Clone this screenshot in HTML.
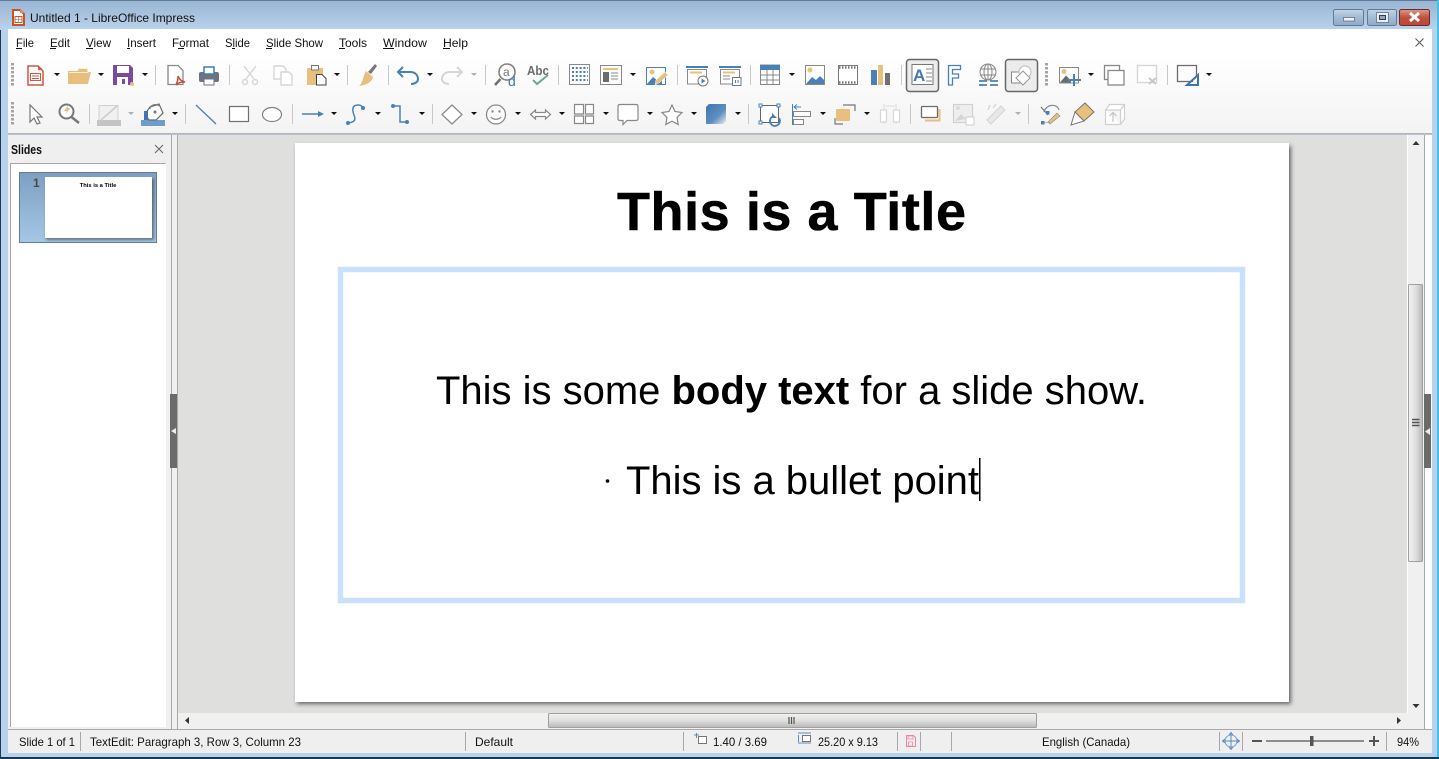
<!DOCTYPE html>
<html><head><meta charset="utf-8"><style>
html,body{margin:0;padding:0;width:1439px;height:759px;overflow:hidden;background:#b9d1ea}
svg{display:block;position:absolute;left:0;top:0}
text{font-family:"Liberation Sans",sans-serif;fill:#111;font-size:12px}
.sep{stroke:#c8c8c8;stroke-width:1}
.g{fill:none;stroke:#8a8a8a;stroke-width:1.4}
.l{fill:none;stroke:#d6d6d6;stroke-width:1.4}
.b{fill:none;stroke:#4a80b8;stroke-width:1.6}
</style></head><body>
<svg width="1439" height="759" viewBox="0 0 1439 759" xmlns="http://www.w3.org/2000/svg">
<defs>
<linearGradient id="tb" x1="0" y1="0" x2="0" y2="1"><stop offset="0" stop-color="#98b4d2"/><stop offset="1" stop-color="#b9d2eb"/></linearGradient>
<linearGradient id="tool" x1="0" y1="0" x2="0" y2="1"><stop offset="0" stop-color="#fff"/><stop offset="1" stop-color="#f3f3f3"/></linearGradient>
<linearGradient id="thumb" x1="0" y1="0" x2="0" y2="1"><stop offset="0" stop-color="#7f9fc2"/><stop offset="1" stop-color="#a6c6e6"/></linearGradient>
<linearGradient id="hs" x1="0" y1="0" x2="0" y2="1"><stop offset="0" stop-color="#f2f2f2"/><stop offset=".5" stop-color="#e0e0e0"/><stop offset="1" stop-color="#b8b8b8"/></linearGradient>
<linearGradient id="vs" x1="0" y1="0" x2="1" y2="0"><stop offset="0" stop-color="#f2f2f2"/><stop offset=".5" stop-color="#e0e0e0"/><stop offset="1" stop-color="#b8b8b8"/></linearGradient>
<linearGradient id="btn" x1="0" y1="0" x2="0" y2="1"><stop offset="0" stop-color="#c3d4e6"/><stop offset=".5" stop-color="#a3bbd4"/><stop offset="1" stop-color="#8fabc9"/></linearGradient>
<linearGradient id="cbtn" x1="0" y1="0" x2="0" y2="1"><stop offset="0" stop-color="#dc9a8c"/><stop offset=".5" stop-color="#c0503c"/><stop offset="1" stop-color="#b84a38"/></linearGradient>
<linearGradient id="cube" x1="0" y1="0" x2="1" y2="1"><stop offset="0" stop-color="#3f74ad"/><stop offset=".6" stop-color="#5f8fc0"/><stop offset="1" stop-color="#e8eef5"/></linearGradient>
<filter id="sh" x="-5%" y="-5%" width="110%" height="110%"><feGaussianBlur stdDeviation="2"/></filter>
<filter id="sh2" x="-10%" y="-10%" width="120%" height="120%"><feGaussianBlur stdDeviation="1.2"/></filter>
</defs>

<!-- window frame -->
<rect width="1439" height="759" fill="#b9d1ea"/>
<rect width="1439" height="29" fill="url(#tb)"/>
<rect x="0" y="0" width="1439" height="1" fill="#5e7c99"/>
<rect x="1437" y="0" width="2" height="759" fill="#3fc3ee"/>
<rect x="0" y="757" width="1439" height="2" fill="#143a52"/>
<rect x="0" y="30" width="1" height="727" fill="#1c3a52"/>

<!-- title -->
<path d="M13 10h7l4 4v11H13z" fill="#fff" stroke="#c2552b" stroke-width="2"/>
<rect x="15" y="16.500" width="7" height="6" fill="none" stroke="#c2552b"/>
<path d="M15 19.500h7M18.500 17v5" stroke="#c2552b" stroke-width=".6"/>
<path d="M20 9l4 4h-4z" fill="#e08a5a"/>
<text x="30" y="22" textLength="165" lengthAdjust="spacingAndGlyphs">Untitled 1 - LibreOffice Impress</text>
<rect x="1333.500" y="9.500" width="30" height="16" rx="2" fill="url(#btn)" stroke="#5f7a96"/>
<rect x="1343.500" y="17.500" width="11" height="3.500" fill="#f0f0f0" stroke="#50657a" stroke-width=".7"/>
<rect x="1367.500" y="9.500" width="29" height="16" rx="2" fill="url(#btn)" stroke="#5f7a96"/>
<rect x="1376.500" y="12.500" width="12" height="10" fill="#e8eef4" stroke="#50657a" stroke-width=".7"/>
<rect x="1379.500" y="15.500" width="6" height="4" fill="#8fa6bd" stroke="#2e3e50"/>
<rect x="1399.500" y="9.500" width="30" height="16" rx="2" fill="url(#cbtn)" stroke="#6b2a22"/>
<path d="M1410 13l9 8M1419 13l-9 8" stroke="#fff" stroke-width="3"/>

<!-- client -->
<rect x="8" y="29" width="1424" height="27" fill="#fff"/>
<rect x="8" y="56" width="1424" height="78" fill="url(#tool)"/>
<rect x="8" y="133" width="1424" height="1.500" fill="#b5b5b5"/>
<g>
<text x="16" y="47" textLength="18" lengthAdjust="spacingAndGlyphs">File</text><rect x="16" y="48" width="6" height="1" fill="#111"/>
<text x="50" y="47" textLength="20" lengthAdjust="spacingAndGlyphs">Edit</text><rect x="50" y="48" width="6" height="1" fill="#111"/>
<text x="86" y="47" textLength="25" lengthAdjust="spacingAndGlyphs">View</text><rect x="86" y="48" width="7" height="1" fill="#111"/>
<text x="127" y="47" textLength="29" lengthAdjust="spacingAndGlyphs">Insert</text><rect x="127" y="48" width="3" height="1" fill="#111"/>
<text x="172" y="47" textLength="37" lengthAdjust="spacingAndGlyphs">Format</text><rect x="178" y="48" width="6" height="1" fill="#111"/>
<text x="225" y="47" textLength="25" lengthAdjust="spacingAndGlyphs">Slide</text><rect x="232" y="48" width="3" height="1" fill="#111"/>
<text x="266" y="47" textLength="57" lengthAdjust="spacingAndGlyphs">Slide Show</text><rect x="266" y="48" width="6" height="1" fill="#111"/>
<text x="339" y="47" textLength="28" lengthAdjust="spacingAndGlyphs">Tools</text><rect x="339" y="48" width="6" height="1" fill="#111"/>
<text x="383" y="47" textLength="44" lengthAdjust="spacingAndGlyphs">Window</text><rect x="383" y="48" width="11" height="1" fill="#111"/>
<text x="443" y="47" textLength="25" lengthAdjust="spacingAndGlyphs">Help</text><rect x="443" y="48" width="7" height="1" fill="#111"/>
</g>
<path d="M1415.500 38.500l8 8M1423.500 38.500l-8 8" stroke="#555" stroke-width="1"/>

<!-- grips -->
<path d="M12.500 63v24M12.500 102v24M1046.500 63v24" stroke="#a4a4a4" stroke-width="3" stroke-dasharray="2.500 1.500"/>

<!-- separators -->
<g class="sep">
<path d="M155.500 65v20M229.500 65v20M347.500 65v20M388.500 65v20M485.500 65v20M558.500 65v20M677.500 65v20M750.500 65v20M901.500 65v20M1167.500 65v20"/>
<path d="M89.500 104v20M185.500 104v20M292.500 104v20M432.500 104v20M748.500 104v20M910.500 104v20M1028.500 104v20"/>
</g>

<!-- dropdown arrows -->
<g fill="#111">
<path d="M54 73h6l-3 3zM98 73h6l-3 3zM142 73h6l-3 3zM334 73h6l-3 3zM427 73h6l-3 3zM630 73h6l-3 3zM789 73h6l-3 3zM1088 73h6l-3 3zM1206 73h6l-3 3z"/>
<path d="M172 112h6l-3 3zM331 112h6l-3 3zM375 112h6l-3 3zM419 112h6l-3 3zM471 112h6l-3 3zM515 112h6l-3 3zM559 112h6l-3 3zM603 112h6l-3 3zM647 112h6l-3 3zM691 112h6l-3 3zM735 112h6l-3 3zM820 112h6l-3 3zM864 112h6l-3 3z"/>
</g>
<g fill="#b0b0b0"><path d="M471 73h6l-3 3zM128 112h6l-3 3zM1015 112h6l-3 3z"/></g>

<!-- Row 1 -->
<path d="M28 66h10l5 5v14H28z" fill="#fff" stroke="#d4573f" stroke-width="1.500"/>
<path d="M38 65l5 5h-5z" fill="#d4573f"/>
<rect x="30.500" y="73.500" width="10" height="7" fill="#fff" stroke="#d4573f"/>
<path d="M32 76h7M32 78.500h7" stroke="#d4573f"/>
<path d="M68 71h9l3-3h8v4h3l-3 12H68z" fill="#e8c07d"/><path d="M80 68.500h7.500l.5 4H69" fill="none" stroke="#fff" stroke-width=".7"/>
<path d="M113 65h17l3 3v17h-20z" fill="#7b4a9c"/><rect x="117" y="66" width="12" height="7" fill="#fff"/><rect x="117" y="77" width="11" height="8" fill="#fff"/><rect x="122" y="79" width="3" height="5" fill="#7b4a9c"/><circle cx="132" cy="84" r="2" fill="#e8c07d"/>
<path d="M168 65.500h10l5 5v14h-15z" fill="#fff" stroke="#888" stroke-width="1.300"/><path d="M176 85c2-5 2-6 2-9 1 3 3 5 7 6-3 0-6 0-9 3z" fill="none" stroke="#c94f3a" stroke-width="1.500"/>
<rect x="199" y="72" width="20" height="10" rx="2" fill="#6b7480"/><rect x="204" y="67" width="10" height="7" fill="#fff" stroke="#3f7ab5" stroke-width="1.500"/><rect x="204" y="79" width="10" height="6" fill="#fff" stroke="#6b7480"/>
<path d="M244 66l10 13M256 66l-10 13" class="l"/><circle cx="245" cy="82" r="2.500" class="l"/><circle cx="255" cy="82" r="2.500" class="l"/>
<path d="M274 66h9l3 3v10h-12z" fill="#fff" stroke="#d6d6d6" stroke-width="1.400"/><path d="M281 72h8l3 3v10h-11z" fill="#fff" stroke="#d6d6d6" stroke-width="1.400"/>
<path d="M307 68h16v17h-16z" fill="#e8c07d"/><rect x="311.500" y="65.500" width="7" height="4.500" fill="#fff" stroke="#777"/><path d="M316.500 74.500h5.500l4 4v6.500h-9.500z" fill="#fff" stroke="#444"/>
<path d="M375 64l2 2-6 8-3-2z" fill="#777"/><path d="M366 71l7 6c-1 4-5 8-14 9 4-3 4-10 7-15z" fill="#e8c07d"/>
<path d="M403 67l-5 5 5 5M398 72h12c6 0 8 4 8 7s-3 5-7 5" class="b" style="stroke-width:2"/>
<path d="M457 67l5 5-5 5M462 72h-12c-6 0-8 4-8 7s3 5 7 5" class="l" style="stroke-width:2"/>
<circle cx="507" cy="72" r="8" fill="#fff" stroke="#808080" stroke-width="1.600"/><path d="M500.500 79l-5.500 6" stroke="#707070" stroke-width="2.600"/><text x="503" y="76" style="font-size:12px;fill:#777">a</text><text x="508" y="86" style="font-size:14px;fill:#3f7ab5">d</text>
<text x="527" y="75" textLength="22" lengthAdjust="spacingAndGlyphs" style="font-size:13px;font-weight:bold;fill:#6b6b6b">Abc</text><path d="M533 80l4 4 11-9" fill="none" stroke="#6fa88f" stroke-width="2"/>
<rect x="569.500" y="64.500" width="20" height="20" fill="none" stroke="#888"/><path d="M572 68h16M572 72h16M572 76h16M572 80h16" stroke="#4a80b8" stroke-width="2" stroke-dasharray="2 1.800"/>
<rect x="600.500" y="65.500" width="21" height="19" fill="#fff" stroke="#888"/><path d="M603 69h15" stroke="#e8c07d" stroke-width="2"/><rect x="603" y="72" width="6" height="10" fill="#6b6b6b"/><path d="M611 73h7M611 76h7M611 79h7" stroke="#888"/>
<rect x="646.500" y="67.500" width="19" height="17" fill="#fff" stroke="#4a80b8"/><circle cx="652" cy="72" r="2.500" fill="#e8c07d"/><path d="M647 84l6-7 5 4 4-3v6z" fill="#4a80b8"/><path d="M655 85l1-5 9-8 3 3-9 8z" fill="#e8c07d" stroke="#fff" stroke-width=".5"/>
<path d="M686 67h22" stroke="#4a80b8" stroke-width="2"/><rect x="687.500" y="69.500" width="19" height="14.500" fill="#fff" stroke="#888"/><path d="M690 72.500h12" stroke="#e8c07d" stroke-width="2"/><circle cx="703" cy="81" r="5" fill="#fff" stroke="#777"/><path d="M701.500 78.500l4 2.500-4 2.500z" fill="#4a80b8"/>
<path d="M719 67h22" stroke="#4a80b8" stroke-width="2"/><rect x="720.500" y="69.500" width="19" height="14.500" fill="#fff" stroke="#888"/><path d="M723 72.500h12" stroke="#e8c07d" stroke-width="2"/><path d="M723 76h7M723 79h7" stroke="#888"/><rect x="732.500" y="77.500" width="8.500" height="8" fill="#fff" stroke="#777"/><path d="M735.500 80v3M738 80v3" stroke="#4a80b8"/>
<rect x="760.500" y="65" width="19" height="19.500" fill="#fff" stroke="#888"/><rect x="760" y="65" width="20" height="5" fill="#4a80b8"/><path d="M767 70v14M773 70v14M761 75h18M761 80h18" stroke="#888"/>
<rect x="805.500" y="65.500" width="19" height="19" fill="#fff" stroke="#888"/><circle cx="810" cy="70" r="2.500" fill="#e8c07d"/><path d="M806 84l6-7 4 3 4-4 4 4v4z" fill="#4a80b8"/>
<rect x="838.500" y="65.500" width="19" height="19" fill="#fff" stroke="#777"/><path d="M839 67.500h18M839 82.500h18" stroke="#777" stroke-width="2.500" stroke-dasharray="1.500 1.500"/>
<rect x="871" y="70" width="6" height="15" fill="#4a80b8"/><rect x="878" y="65" width="5" height="20" fill="#e8c07d"/><rect x="885" y="73" width="5" height="12" fill="#707070"/>
<rect x="906.500" y="59.500" width="32" height="32" rx="3" fill="#ececec" stroke="#666" stroke-width="1.500"/>
<rect x="912" y="64.500" width="21" height="20" fill="#fff" stroke="#777"/><text x="913" y="81" style="font-size:17px;font-weight:bold;fill:#3f7ab5">A</text><path d="M926 69h6M926 73h6M926 77h6M926 81h6" stroke="#888"/>
<path d="M948.500 65.500h12v4h-8v4.500h6v4h-6v7h-4z" fill="none" stroke="#4a80b8" stroke-width="1.300"/>
<circle cx="988" cy="72" r="8" fill="none" stroke="#888"/><ellipse cx="988" cy="72" rx="4" ry="8" fill="none" stroke="#888"/><path d="M980 69h16M980 75h16M988 64v16" stroke="#888"/><path d="M979 81h8M990 81h8M979 85h8M990 85h8" stroke="#4a80b8" stroke-width="1.800"/>
<rect x="1005.500" y="59.500" width="32" height="32" rx="3" fill="#ececec" stroke="#666" stroke-width="1.500"/>
<rect x="1011.500" y="72" width="12" height="11" fill="#fff" stroke="#888"/><circle cx="1025" cy="72" r="6" fill="#fff" stroke="#bbb"/><path d="M1023 71l7 7-7 7-7-7z" fill="#fff" stroke="#999"/>
<rect x="1059.500" y="67.500" width="19" height="15.500" fill="#fff" stroke="#888"/><circle cx="1064" cy="71.500" r="2.500" fill="#e8c07d"/><path d="M1060 82.500l6-7 5 5v2z" fill="#6b6b6b"/><path d="M1074 74v12M1068 80h13" stroke="#4a80b8" stroke-width="2"/>
<rect x="1104.500" y="65.500" width="15" height="14" fill="#fff" stroke="#888" stroke-width="1.300"/><rect x="1108" y="70.500" width="16" height="14.500" fill="#fff" stroke="#888" stroke-width="1.300"/>
<rect x="1137.500" y="65.500" width="19" height="17" fill="#fff" stroke="#d6d6d6" stroke-width="1.400"/><path d="M1149 78l7 6M1156 78l-7 6" stroke="#c8c8c8" stroke-width="2"/>
<path d="M1193 81.500h-15.500V65.500h19V76" fill="none" stroke="#6b6b6b" stroke-width="1.300"/><path d="M1187 85l11-10v10z" fill="none" stroke="#3f74ad" stroke-width="2"/>

<!-- Row 2 -->
<path d="M30 105v17l4-4 3 6 3-1-3-6h5z" fill="#fff" stroke="#777" stroke-width="1.200"/>
<circle cx="66.500" cy="111.500" r="7" fill="#fff" stroke="#777" stroke-width="2"/><path d="M71.500 117l7.500 6" stroke="#777" stroke-width="2.500"/><path d="M69 104l-5 7h3l-2.500 4 6-7h-3z" fill="#e8c07d"/>
<rect x="99" y="105.500" width="19" height="15" fill="#f0f0f0" stroke="#d0d0d0"/><path d="M101 120l16-14" stroke="#ccc" stroke-width="1.500"/><rect x="97" y="120" width="24" height="6" fill="#c4c4c4"/>
<rect x="141" y="120" width="24" height="6" fill="#6f9bcd"/><path d="M150 107l9-3 4 9-7 7h-7l-4-6z" fill="#fff" stroke="#6b6b6b" stroke-width="1.200"/><rect x="144" y="111" width="4" height="9" fill="#3f74ad"/><circle cx="155" cy="112" r="1.500" fill="#777"/><path d="M150 109c0-4 6-6 9-3" fill="none" stroke="#777"/>
<path d="M196 105l20 19" stroke="#4a80b8" stroke-width="1.300"/>
<rect x="229.500" y="106.500" width="19" height="15" fill="#fff" stroke="#6f6f6f" stroke-width="1.200"/>
<ellipse cx="272" cy="114.500" rx="9.500" ry="7" fill="#fff" stroke="#808080" stroke-width="1.200"/>
<path d="M302 114h18" stroke="#4a80b8" stroke-width="1.500"/><path d="M318 111l6 3-6 3z" fill="#4a80b8"/>
<path d="M348 123c7-1 8-3 6-8s-2-10 4-10c3 0 4 1 5 3" fill="none" stroke="#4a80b8" stroke-width="1.500"/><circle cx="348" cy="123" r="2" fill="#4a80b8"/><circle cx="363" cy="108" r="2" fill="#4a80b8"/>
<path d="M393 106h7v16h7" fill="none" stroke="#4a80b8" stroke-width="1.500"/><circle cx="393" cy="106" r="2" fill="#4a80b8"/><circle cx="407" cy="122" r="2" fill="#4a80b8"/>
<path d="M452 105l10 9.500-10 9.500-10-9.500z" fill="#fff" stroke="#8a8a8a" stroke-width="1.300"/>
<circle cx="496" cy="114.500" r="9.500" fill="#fff" stroke="#8a8a8a" stroke-width="1.300"/><circle cx="492.500" cy="111.500" r="1.200" fill="#888"/><circle cx="499.500" cy="111.500" r="1.200" fill="#888"/><path d="M491 117c2 3 8 3 10 0" fill="none" stroke="#888" stroke-width="1.200"/>
<path d="M530.500 114.500l5-4.500v2.500h10V110l5 4.500-5 4.500v-2.500h-10v2.500z" fill="#fff" stroke="#888" stroke-width="1.200"/>
<path d="M574.500 104.500h9v9.500h-9zM585.500 104.500h8v9.500h-8zM574.500 116h9v7.500h-9zM585.500 116h8v7.500h-8z" fill="#fff" stroke="#888" stroke-width="1.200"/>
<path d="M620 104.500h16q2 0 2 2v12q0 2-2 2h-9l-4 4v-4h-3q-2 0-2-2v-12q0-2 2-2z" fill="#fff" stroke="#888" stroke-width="1.200"/>
<path d="M672 105l3 6.500 7 1-5 5 1.200 7-6.200-3.300-6.200 3.300 1.200-7-5-5 7-1z" fill="#fff" stroke="#888" stroke-width="1.200"/>
<path d="M709 104h17v17l-3 3h-17v-17z" fill="url(#cube)"/>
<rect x="760.500" y="105.500" width="18" height="17" fill="#fff" stroke="#666"/><g fill="#fff" stroke="#4a80b8"><rect x="759" y="104" width="3" height="3"/><rect x="777" y="104" width="3" height="3"/><rect x="759" y="121" width="3" height="3"/></g><path d="M779 118a5 5 0 1 1-5-2" fill="none" stroke="#4a80b8" stroke-width="1.800"/><path d="M772 113v5h5z" fill="#4a80b8"/>
<path d="M792.500 104v21" stroke="#4a80b8"/><path d="M794 107h7" stroke="#4a80b8"/><path d="M797 104.500l-3 2.500 3 2.500" fill="none" stroke="#4a80b8"/><rect x="793.500" y="111.500" width="17" height="5" fill="#fff" stroke="#888"/><rect x="793.500" y="119.500" width="10" height="5" fill="#fff" stroke="#888"/>
<path d="M843 105h12v6M835 118v6h8" fill="none" stroke="#777" stroke-width="1.200"/><rect x="836" y="109" width="14" height="12" rx="1" fill="#e8c07d"/>
<path d="M884 104v20M896 104v20M885 106h10" stroke="#dcdcdc"/><rect x="880.500" y="110" width="6" height="12" fill="#fff" stroke="#d6d6d6" stroke-width="1.200"/><rect x="893.500" y="110" width="6" height="12" fill="#fff" stroke="#d6d6d6" stroke-width="1.200"/>
<rect x="921.500" y="106.500" width="16" height="11" rx="1" fill="#fff" stroke="#6b6b6b" stroke-width="1.300"/><path d="M939.500 109v11.500H925" fill="none" stroke="#e8c07d" stroke-width="2"/>
<rect x="953.500" y="104.500" width="19" height="18" fill="#eee" stroke="#d0d0d0" stroke-width="1.200"/><path d="M955 121l6-7 5 5z" fill="#d6d6d6"/><circle cx="958" cy="108" r="2" fill="#dcdcdc"/><rect x="966" y="117" width="8" height="8" fill="#fff" stroke="#ccc"/>
<path d="M987 120l14-14 4 4-14 14z" fill="#e8e8e8" stroke="#d4d4d4"/><path d="M990 105l-2 5M996 104l-3 4" stroke="#d8d8d8" stroke-width="1.500"/>
<path d="M1044 112c2-8 13-9 15-2" fill="none" stroke="#888" stroke-width="1.200"/><path d="M1041 107l7 8" stroke="#777" stroke-width="1.200"/><rect x="1046" y="111" width="3.500" height="3.500" fill="#4a80b8"/><rect x="1041" y="121" width="3.500" height="3.500" fill="#4a80b8"/><path d="M1050 124l10-8-3-3-9 9zM1044 122.500h6" fill="#e8c07d" stroke="#888" stroke-width=".6"/>
<path d="M1085 103l9 9-10 9-9-9z" fill="#e8c07d" stroke="#777" stroke-width="1"/><path d="M1075 112l9 9-13 4z" fill="#fff" stroke="#777" stroke-width="1"/>
<path d="M1105.500 110v14.500h15V110zM1105.500 110l4-5.500h15V119l-4 5.500M1120.500 110l4-5.500" fill="#fff" stroke="#d0d0d0" stroke-width="1.200"/><path d="M1113 122v-9M1109.500 116l3.500-3.500 3.500 3.500" fill="none" stroke="#c4c4c4" stroke-width="1.200"/>

<!-- sidebar -->
<rect x="8" y="135" width="159" height="595" fill="#efefef"/>
<text x="11" y="154" textLength="31" lengthAdjust="spacingAndGlyphs" style="font-weight:bold;font-size:12.500px">Slides</text>
<path d="M155 145l8 8M163 145l-8 8" stroke="#666" stroke-width="1"/>
<rect x="10" y="163" width="156" height="564" fill="#fff"/>
<path d="M10.500 727V163.500H165.500" fill="none" stroke="#a8a8a8"/>
<rect x="19.500" y="172.500" width="137" height="70" fill="url(#thumb)" stroke="#5d7d9d"/>
<rect x="46" y="179" width="108" height="61" fill="#333" opacity=".55" filter="url(#sh2)"/>
<rect x="45" y="177" width="107" height="61" fill="#fff"/>
<text x="33" y="187" style="font-size:12px;font-weight:bold;fill:#4a4a4a">1</text>
<text x="98" y="187" text-anchor="middle" style="font-size:5.800px;font-weight:bold;fill:#000">This is a Title</text>

<!-- splitter / main -->
<rect x="167" y="135" width="11" height="595" fill="#f0f0f0"/>
<path d="M171.500 135v595M177.500 135v595" stroke="#a8a8a8"/>
<rect x="170" y="394" width="7" height="74" fill="#6b6b6b"/>
<path d="M176 428l-5 3 5 3z" fill="#eee"/>
<rect x="178" y="135" width="1229" height="578" fill="#dfdfde"/>

<!-- slide -->
<rect x="297" y="146" width="994" height="558" fill="#333" opacity=".7" filter="url(#sh)"/>
<rect x="295" y="143" width="994" height="559" fill="#fff"/>
<text x="617" y="230" textLength="349" style="font-size:54px;font-weight:bold;fill:#000;stroke:#000;stroke-width:.5">This is a Title</text>
<rect x="340.500" y="269.500" width="902" height="331" fill="none" stroke="#c9e1fb" stroke-width="5.500"/>
<text x="436" y="404" textLength="711" style="font-size:40px;fill:#000">This is some <tspan style="font-weight:bold">body text</tspan> for a slide show.</text>
<circle cx="607.500" cy="481" r="1.800" fill="#000"/>
<text x="626" y="494" textLength="353" style="font-size:40px;fill:#000">This is a bullet point</text>
<rect x="979" y="458" width="1.500" height="43" fill="#000"/>

<!-- v scrollbar -->
<rect x="1407" y="135" width="17" height="595" fill="#f0f0f0"/>
<path d="M1407.500 135v578" stroke="#fff"/>
<path d="M1424.500 135v595" stroke="#a8a8a8"/>
<rect x="1425" y="135" width="7" height="595" fill="#fff"/>
<path d="M1416 141l-3.500 4h7zM1416 708l-3.500-4h7z" fill="#333"/>
<rect x="1408.500" y="284.500" width="14" height="277" rx="1" fill="url(#vs)" stroke="#a0a0a0"/>
<path d="M1412 419.500h7.500M1412 422.500h7.500M1412 425.500h7.500" stroke="#555" stroke-width="1.600"/>
<rect x="1424" y="394" width="7" height="74" fill="#6b6b6b"/>
<path d="M1425 431.500l5-3.500v7z" fill="#eee"/>

<!-- h scrollbar -->
<rect x="178" y="713" width="1246" height="16" fill="#f0f0f0"/>
<rect x="548.500" y="713.500" width="488" height="14" rx="1" fill="url(#hs)" stroke="#a0a0a0"/>
<path d="M789 717v7M791.500 717v7M794 717v7" stroke="#555" stroke-width="1.200"/>
<path d="M189 717l-4 3.500 4 3.500zM1397 717l4 3.500-4 3.500z" fill="#333"/>

<!-- status bar -->
<rect x="8" y="729" width="1424" height="24" fill="#efefef"/>
<path d="M8 729.500h1424" stroke="#a8a8a8"/>
<g class="sep" style="stroke:#a8a8a8">
<path d="M80.500 732v19M465.500 732v19M683.500 732v19M897.500 732v19M920.500 732v19M951.500 732v19M1219.500 732v19M1242.500 732v19M1386.500 732v19"/>
</g>
<g>
<text x="19" y="746" textLength="56" lengthAdjust="spacingAndGlyphs">Slide 1 of 1</text>
<text x="90" y="746" textLength="211" lengthAdjust="spacingAndGlyphs">TextEdit: Paragraph 3, Row 3, Column 23</text>
<text x="475" y="746" textLength="38" lengthAdjust="spacingAndGlyphs">Default</text>
<text x="713" y="746" textLength="54" lengthAdjust="spacingAndGlyphs">1.40 / 3.69</text>
<text x="818" y="746" textLength="60" lengthAdjust="spacingAndGlyphs">25.20 x 9.13</text>
<text x="1042" y="746" textLength="88" lengthAdjust="spacingAndGlyphs">English (Canada)</text>
<text x="1397" y="746" textLength="22" lengthAdjust="spacingAndGlyphs">94%</text>
</g>
<rect x="698.500" y="736.500" width="8" height="7" fill="#fff" stroke="#777"/><path d="M694 735h5M696.500 733v5" stroke="#5a8cc2"/>
<path d="M798 733h13M798 743h13" stroke="#5a8cc2"/><rect x="802.500" y="735.500" width="8" height="6" fill="#fff" stroke="#777"/><path d="M798.500 735v7" stroke="#5a8cc2"/>
<path d="M906.500 735.500h7l2 2v9h-9z" fill="#fbeef0" stroke="#e8899a"/><path d="M908 736h5v3h-5zM908.500 742h4v4h-4z" fill="none" stroke="#e8899a" stroke-width=".8"/>
<circle cx="1231" cy="741" r="6" fill="none" stroke="#7aa3cf"/><path d="M1231 733v16M1223 741h16" stroke="#5a8cc2"/><path d="M1229 735l2-2.500 2 2.500M1229 747l2 2.500 2-2.500M1225 739l-2.500 2 2.500 2M1237 739l2.500 2-2.500 2" fill="none" stroke="#5a8cc2"/>
<path d="M1252 741h10" stroke="#555" stroke-width="2"/>
<path d="M1266 741h98" stroke="#555" stroke-width="1.200"/>
<rect x="1310" y="736" width="3.500" height="10" fill="#555"/>
<path d="M1369 741h10M1374 736v10" stroke="#555" stroke-width="2"/>
</svg>
</body></html>
